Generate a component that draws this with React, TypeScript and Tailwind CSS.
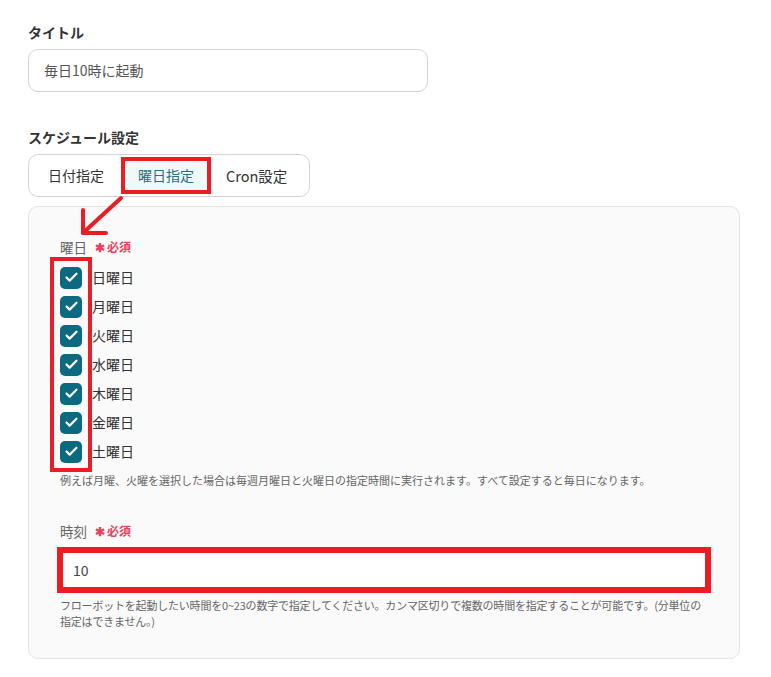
import { Check } from "lucide-react";

const days = ["日曜日", "月曜日", "火曜日", "水曜日", "木曜日", "金曜日", "土曜日"];

function Required() {
  return (
    <span className="ml-[8px] text-[12px] font-bold text-[#e8435a]">
      <span className="mr-[2px]">✱</span>必須
    </span>
  );
}

export default function App() {
  return (
    <div
      className="relative min-h-[677px] w-[771px] bg-white px-[28px] pt-[22px] text-[#333]"
      style={{ fontFamily: '"Noto Sans CJK JP", "Noto Sans", sans-serif' }}
    >
      <div className="text-[14px] font-bold leading-[20px]">タイトル</div>
      <div className="mt-[7px] flex h-[43px] w-[400px] items-center rounded-[10px] border border-[#d4d4d8] px-[15px] text-[14px] text-[#555]">
        毎日10時に起動
      </div>

      <div className="mt-[35px] text-[14px] font-bold leading-[20px]">スケジュール設定</div>
      <div className="mt-[7px] inline-flex h-[43px] items-center rounded-[10px] border border-[#d4d4d8] p-[2px] text-[14px]">
        <div className="flex h-[37px] w-[90px] items-center justify-center">日付指定</div>
        <div className="flex h-[37px] w-[90px] items-center justify-center border-4 border-[#ec1c24] bg-[#eef9f9] text-[#2e6d7c]">
          曜日指定
        </div>
        <div className="flex h-[37px] items-center pl-[15px] pr-[20px] text-[14.5px]">Cron設定</div>
      </div>

      <div className="mt-[9px] h-[453px] w-[712px] rounded-[10px] border border-[#e5e5e5] bg-[#fafafa] px-[31px] pt-[30px]">
        <div className="flex items-center text-[13.5px] leading-[20px] text-[#666]">
          曜日
          <Required />
        </div>

        <div className="relative mt-[6px]">
          {days.map((d) => (
            <div key={d} className="flex h-[29px] items-center">
              <div className="flex h-[22px] w-[22px] items-center justify-center rounded-[5px] bg-[#0c6a80]">
                <Check size={15} strokeWidth={3.5} color="white" />
              </div>
              <span className="ml-[10px] text-[14px] text-[#333]">{d}</span>
            </div>
          ))}
          <div className="pointer-events-none absolute left-[-10px] top-[-6px] h-[215px] w-[42px] border-4 border-[#ec1c24]" />
        </div>

        <p className="mt-[6px] text-[11px] leading-[16px] text-[#666]">
          例えば月曜、火曜を選択した場合は毎週月曜日と火曜日の指定時間に実行されます。すべて設定すると毎日になります。
        </p>

        <div className="mt-[33px] flex items-center text-[13.5px] leading-[20px] text-[#666]">
          時刻
          <Required />
        </div>
        <div className="-mx-[3px] mt-[6px] flex h-[46px] items-center border-[6px] border-[#ec1c24] bg-white px-[10px] text-[14px] text-[#444]">
          10
        </div>
        <p className="mt-[4px] text-[11px] leading-[16px] tracking-[-0.2px] text-[#666]">
          フローボットを起動したい時間を0~23の数字で指定してください。カンマ区切りで複数の時間を指定することが可能です。(分単位の指定はできません。)
        </p>
      </div>

      <svg
        className="pointer-events-none absolute left-0 top-0"
        width="771"
        height="677"
        viewBox="0 0 771 677"
      >
        <g stroke="#ec1c24" strokeWidth="4" strokeLinecap="round" fill="none">
          <line x1="121" y1="198" x2="84" y2="232" />
          <line x1="83" y1="233" x2="83" y2="210" />
          <line x1="83" y1="233" x2="106" y2="233" />
        </g>
      </svg>
    </div>
  );
}
